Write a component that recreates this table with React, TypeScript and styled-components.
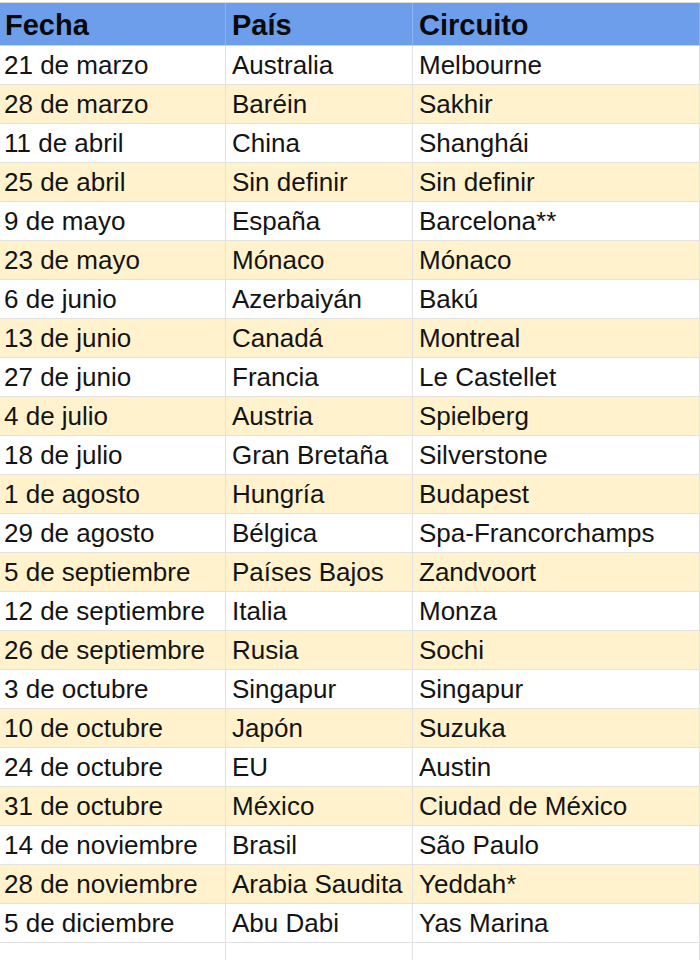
import React from "react";
import styled, { createGlobalStyle } from "styled-components";

const races = [
  ["21 de marzo", "Australia", "Melbourne"],
  ["28 de marzo", "Baréin", "Sakhir"],
  ["11 de abril", "China", "Shanghái"],
  ["25 de abril", "Sin definir", "Sin definir"],
  ["9 de mayo", "España", "Barcelona**"],
  ["23 de mayo", "Mónaco", "Mónaco"],
  ["6 de junio", "Azerbaiyán", "Bakú"],
  ["13 de junio", "Canadá", "Montreal"],
  ["27 de junio", "Francia", "Le Castellet"],
  ["4 de julio", "Austria", "Spielberg"],
  ["18 de julio", "Gran Bretaña", "Silverstone"],
  ["1 de agosto", "Hungría", "Budapest"],
  ["29 de agosto", "Bélgica", "Spa-Francorchamps"],
  ["5 de septiembre", "Países Bajos", "Zandvoort"],
  ["12 de septiembre", "Italia", "Monza"],
  ["26 de septiembre", "Rusia", "Sochi"],
  ["3 de octubre", "Singapur", "Singapur"],
  ["10 de octubre", "Japón", "Suzuka"],
  ["24 de octubre", "EU", "Austin"],
  ["31 de octubre", "México", "Ciudad de México"],
  ["14 de noviembre", "Brasil", "São Paulo"],
  ["28 de noviembre", "Arabia Saudita", "Yeddah*"],
  ["5 de diciembre", "Abu Dabi", "Yas Marina"],
];

const GlobalStyle = createGlobalStyle`
  html, body {
    margin: 0;
    padding: 0;
    background: #ffffff;
  }
  body {
    font-family: "Liberation Sans", Arial, sans-serif;
    overflow: hidden;
  }
`;

const Sheet = styled.div`
  width: 700px;
  height: 960px;
  padding-top: 2px;
  box-sizing: border-box;
  overflow: hidden;
`;

const Grid = styled.div`
  display: grid;
  grid-template-columns: 226px 187px 1fr;
  border-top: 1px solid #dadada;
`;

const HeadCell = styled.div<{ $first?: boolean }>`
  height: 42px;
  line-height: 44px;
  padding-left: ${(p) => (p.$first ? "5px" : "6px")};
  background: #6d9eeb;
  border-right: 1px solid #8eb3ef;
  border-bottom: 1px solid #c9d6ea;
  font-size: 29px;
  font-weight: 700;
  color: #0a0a0a;
  white-space: nowrap;
  overflow: hidden;
`;

const Cell = styled.div<{ $tan: boolean; $first?: boolean }>`
  height: 38px;
  line-height: 39px;
  padding-left: ${(p) => (p.$first ? "4px" : "6px")};
  background: ${(p) => (p.$tan ? "#fff2cc" : "#ffffff")};
  border-right: 1px solid #e2e2e2;
  border-bottom: 1px solid ${(p) => (p.$tan ? "#e9e2cc" : "#e2e2e2")};
  font-size: 26px;
  color: #141414;
  white-space: nowrap;
  overflow: hidden;
`;

export default function App() {
  return (
    <Sheet>
      <GlobalStyle />
      <Grid>
        <HeadCell $first>Fecha</HeadCell>
        <HeadCell>País</HeadCell>
        <HeadCell>Circuito</HeadCell>
        {races.map((row, i) =>
          row.map((text, j) => (
            <Cell key={`${i}-${j}`} $tan={i % 2 === 1} $first={j === 0}>
              {text}
            </Cell>
          ))
        )}
        <Cell $tan={false} $first />
        <Cell $tan={false} />
        <Cell $tan={false} />
      </Grid>
    </Sheet>
  );
}
